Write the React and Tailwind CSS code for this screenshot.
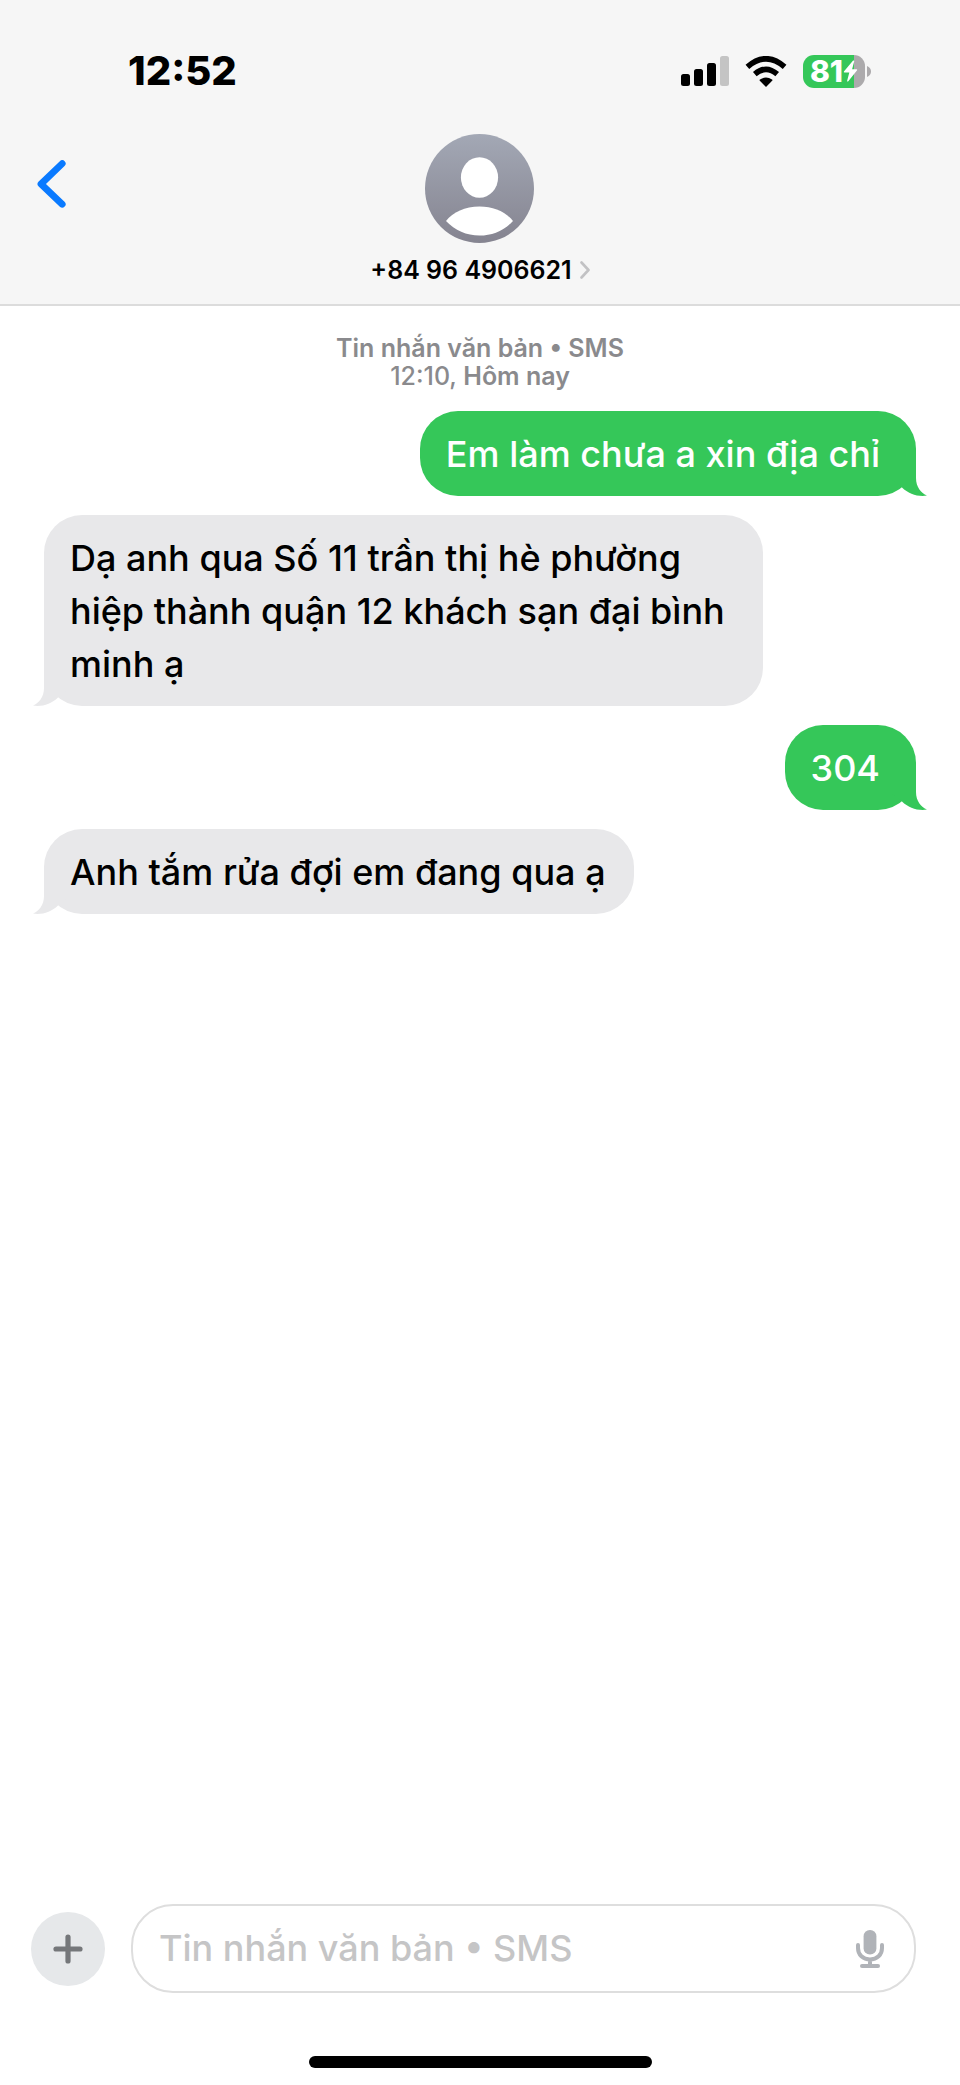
import { useState } from "react";

const messages = [
  { id: 1, text: "Em làm chưa a xin địa chỉ", sent: true },
  {
    id: 2,
    text: "Dạ anh qua Số 11 trần thị hè phường hiệp thành quận 12 khách sạn đại bình minh ạ",
    sent: false,
  },
  { id: 3, text: "304", sent: true },
  { id: 4, text: "Anh tắm rửa đợi em đang qua ạ", sent: false },
];

function SignalIcon() {
  return (
    <svg width="48" height="30" viewBox="0 0 48 30" aria-hidden="true">
      <rect x="0" y="18" width="9" height="12" rx="2.5" />
      <rect x="13" y="13" width="9" height="17" rx="2.5" />
      <rect x="26" y="7" width="9" height="23" rx="2.5" />
      <rect x="39" y="0" width="9" height="30" rx="2.5" fill="#c4c4c4" />
    </svg>
  );
}

function WifiIcon() {
  return (
    <svg width="42" height="31" viewBox="0 0 42 31" aria-hidden="true">
      <path d="M21 31 L14.6 24.6 Q14.3 24 15 23.5 Q21 19.6 27 23.5 Q27.7 24 27.4 24.6 Z" />
      <path d="M9.8 18.2 Q21 8.6 32.2 18.2" fill="none" stroke="#000" strokeWidth="5.6" />
      <path d="M2.4 10.8 Q21 -5.2 39.6 10.8" fill="none" stroke="#000" strokeWidth="5.6" />
    </svg>
  );
}

function Battery({ level }) {
  return (
    <div className="flex items-center gap-0.5">
      <div className="flex h-[33px] w-[62px] items-center justify-center rounded-[11px] bg-[linear-gradient(to_right,#35c759_82%,#acaaac_82%)] text-white">
        <span className="text-[30px] leading-8 font-extrabold">{level}</span>
        <svg width="15" height="22" viewBox="0 0 14 22" fill="currentColor" aria-hidden="true">
          <path d="M9.6 0.6 L0.4 11.6 Q0 12.6 1 12.6 H5.8 L3.6 21 Q3.8 22 4.8 21.2 L13.6 10.2 Q14 9.2 13 9.2 H8.6 L10.8 1 Q10.6 0 9.6 0.6 Z" />
        </svg>
      </div>
      <svg width="4" height="11" viewBox="0 0 4 11" aria-hidden="true">
        <path d="M0 0 Q4 1.6 4 5.5 Q4 9.4 0 11 Z" fill="#acaaac" />
      </svg>
    </div>
  );
}

function Avatar() {
  return (
    <svg width="109" height="109" viewBox="0 0 109 109" aria-hidden="true">
      <defs>
        <linearGradient id="avatarFill" x1="0" y1="0" x2="0" y2="1">
          <stop offset="0" stopColor="#a3a8b5" />
          <stop offset="1" stopColor="#858490" />
        </linearGradient>
      </defs>
      <circle cx="54.5" cy="54.5" r="54.5" fill="url(#avatarFill)" />
      <ellipse cx="54.5" cy="43.5" rx="18.6" ry="20.2" fill="#fff" />
      <path d="M21 87 C28 78 40 72.5 54.5 72.5 C69 72.5 81 78 88 87 C79 96.5 67.5 101.5 54.5 101.5 C41.5 101.5 30 96.5 21 87 Z" fill="#fff" />
    </svg>
  );
}

function Tail({ sent }) {
  return (
    <svg
      width="40"
      height="40"
      viewBox="0 0 40 40"
      fill="currentColor"
      aria-hidden="true"
      className={
        sent
          ? "absolute -right-3 bottom-0 text-[#35c759]"
          : "absolute -left-3 bottom-0 -scale-x-100 text-[#e8e8ea]"
      }
    >
      <path d="M28 0 V22 C28 31 33 37 39 39.6 C30 41 20.5 38 14 31.5 L0 20 V0 Z" />
    </svg>
  );
}

function Bubble({ message }) {
  const { text, sent } = message;
  return (
    <li
      className={
        sent
          ? "relative max-w-[82.5%] self-end rounded-[38px] bg-[#35c759] pt-[17px] pr-9 pb-[15px] pl-[26px] text-white"
          : "relative max-w-[82.5%] self-start rounded-[38px] bg-[#e8e8ea] pt-[17px] pr-7 pb-[15px] pl-[26px] text-black"
      }
    >
      <Tail sent={sent} />
      <p className="relative text-[36px] leading-[53px] font-medium">{text}</p>
    </li>
  );
}

export default function App() {
  const [draft, setDraft] = useState("");

  return (
    <div className="flex min-h-screen flex-col bg-white font-['Inter','Liberation_Sans',sans-serif] text-black">
      <header className="border-b-2 border-[#dcdcdc] bg-[#f6f6f6] pt-12 pb-[18px]">
        <div className="flex h-[46px] items-center justify-between pr-[89px] pl-32">
          <time className="text-[40px] leading-[46px] font-extrabold">12:52</time>
          <div className="flex items-center gap-4">
            <SignalIcon />
            <WifiIcon />
            <Battery level={81} />
          </div>
        </div>

        <div className="mt-10 grid grid-cols-[1fr_auto_1fr]">
          <button type="button" aria-label="Back" className="mt-[26px] ml-9 self-start justify-self-start">
            <svg width="30" height="48" viewBox="0 0 30 48" fill="none" aria-hidden="true">
              <path d="M26.2 3.6 L5 24 L26.2 44.2" stroke="#0a7aff" strokeWidth="6.8" strokeLinecap="round" strokeLinejoin="round" />
            </svg>
          </button>
          <button type="button" className="flex flex-col items-center gap-[11px]">
            <Avatar />
            <span className="flex items-center gap-2 text-[25px] leading-8 font-semibold">
              +84 96 4906621
              <svg width="10" height="18" viewBox="0 0 10 18" fill="none" aria-hidden="true">
                <path d="M1.5 1.5 L8.5 9 L1.5 16.5" stroke="#c2c2c4" strokeWidth="2.6" strokeLinecap="round" strokeLinejoin="round" />
              </svg>
            </span>
          </button>
        </div>
      </header>

      <main className="flex-1 pt-7 pr-11 pl-11">
        <p className="mb-[21px] text-center text-[25px] leading-7 font-semibold text-[#8a8a8d]">
          Tin nhắn văn bản • SMS
          <br />
          <span className="font-medium">12:10,</span> Hôm nay
        </p>
        <ul className="flex flex-col gap-[19px]">
          {messages.map((message) => (
            <Bubble key={message.id} message={message} />
          ))}
        </ul>
      </main>

      <footer className="pb-[17px]">
        <form
          className="flex items-center gap-[26px] pr-11 pl-[31px]"
          onSubmit={(e) => e.preventDefault()}
        >
          <button
            type="button"
            aria-label="Add"
            className="flex size-[74px] shrink-0 items-center justify-center rounded-full bg-[#e6e8ea]"
          >
            <svg width="30" height="30" viewBox="0 0 30 30" fill="none" aria-hidden="true">
              <path d="M15 3 V27 M3 15 H27" stroke="#75777a" strokeWidth="5.2" strokeLinecap="round" />
            </svg>
          </button>
          <div className="flex h-[89px] min-w-0 flex-1 items-center rounded-[42px] border-2 border-[#dedede] pr-[30px] pl-[26px]">
            <input
              type="text"
              aria-label="Tin nhắn văn bản • SMS"
              placeholder="Tin nhắn văn bản • SMS"
              value={draft}
              onChange={(e) => setDraft(e.target.value)}
              className="min-w-0 flex-1 text-[36px] leading-[53px] font-medium outline-none placeholder:text-[#c5c5c6]"
            />
            <button type="button" aria-label="Dictate">
              <svg width="28" height="38" viewBox="0 0 28 38" fill="none" aria-hidden="true">
                <rect x="7.6" y="0" width="12.8" height="24.6" rx="6.2" fill="#b0b3b8" />
                <path d="M2 15 V18 C2 25 7 29.4 14 29.4 C21 29.4 26 25 26 18 V15 M14 29.4 V36" stroke="#b0b3b8" strokeWidth="4" strokeLinecap="round" />
                <path d="M6 36 H22" stroke="#b0b3b8" strokeWidth="4" strokeLinecap="round" />
              </svg>
            </button>
          </div>
        </form>
        <div className="mx-auto mt-[63px] h-3 w-[343px] rounded-full bg-black" />
      </footer>
    </div>
  );
}
